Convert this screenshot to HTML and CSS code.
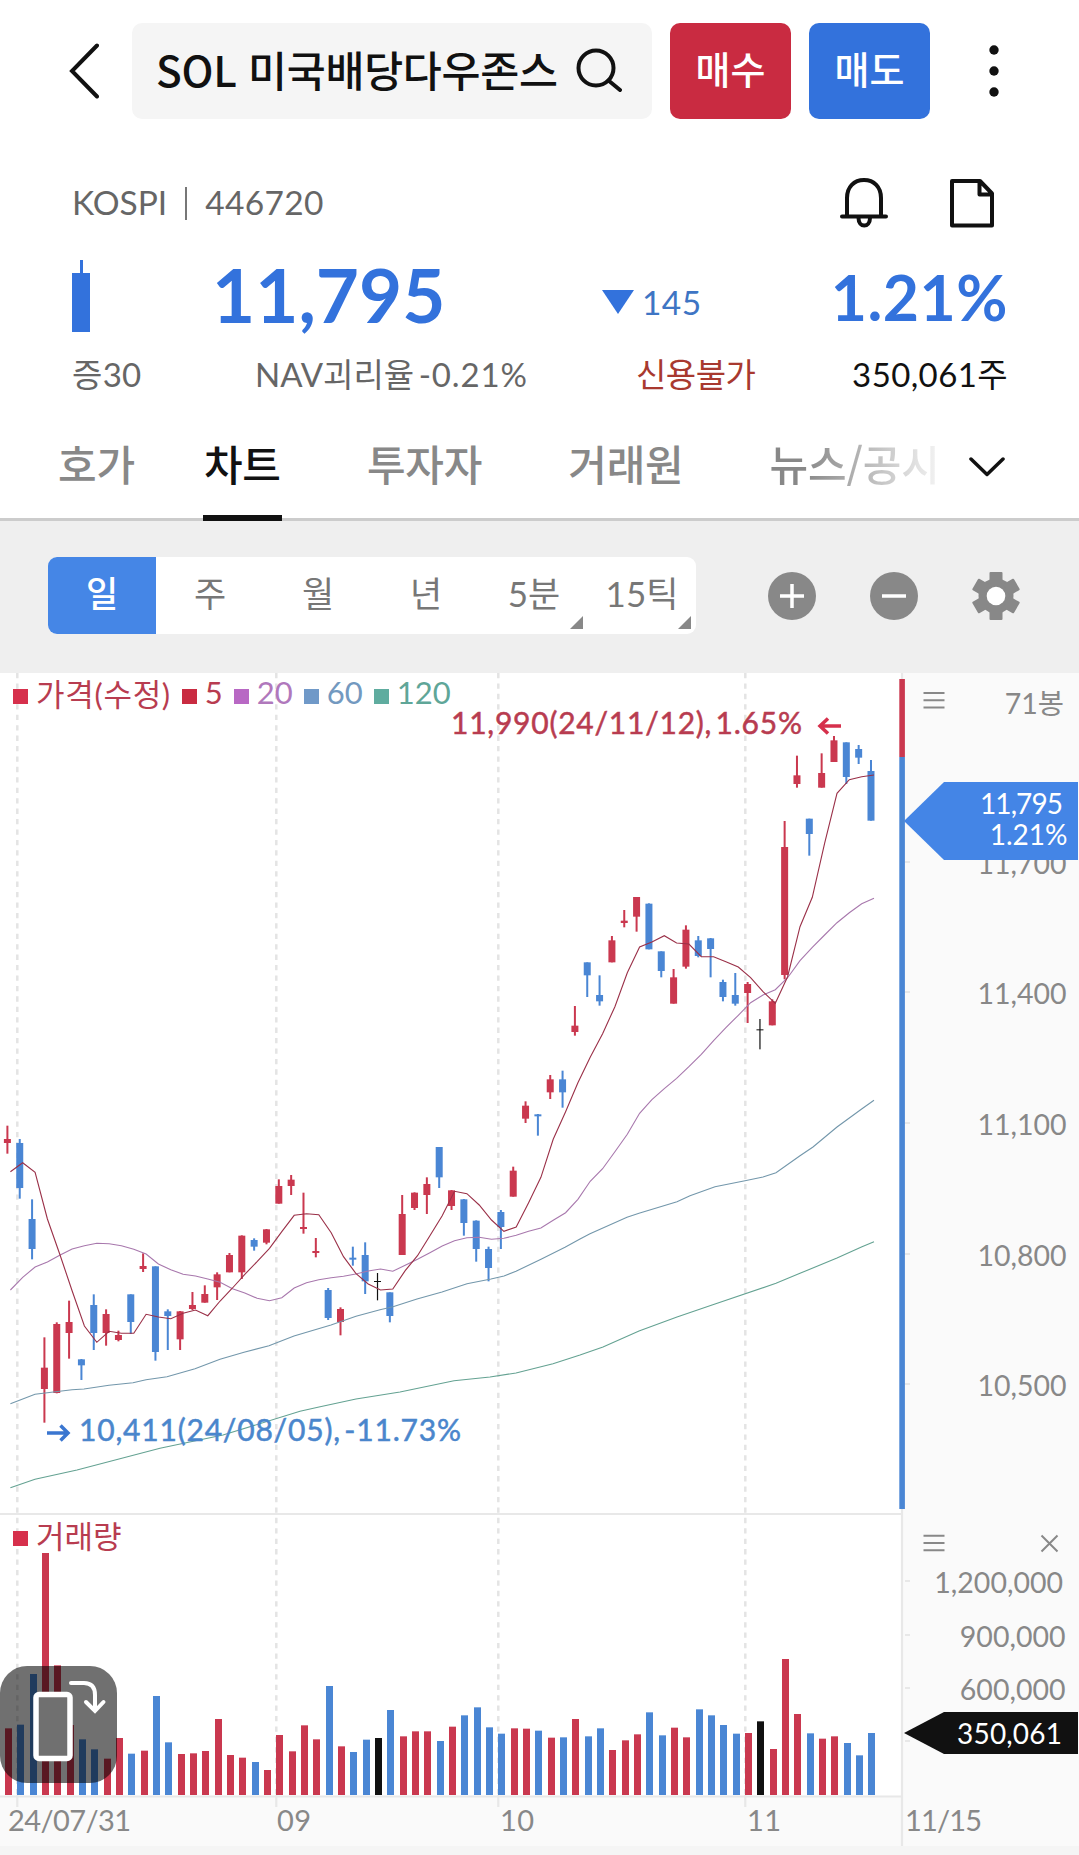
FILE: index.html
```html
<!DOCTYPE html>
<html lang="ko">
<head>
    <meta charset="UTF-8">
    <meta name="viewport" content="width=device-width, initial-scale=1.0">
    <title>SOL 미국배당다우존스</title>
    <link rel="stylesheet" href="styles.css">
</head>
<body>
    <header class="topbar">
        <svg class="back" width="30" height="56" viewBox="0 0 30 56"><path d="M28 2.500L3 28L28 53.500"/></svg>
        <div class="search">
            <span class="search-name">SOL 미국배당다우존스</span>
            <svg width="46" height="46" viewBox="0 0 46 46"><circle cx="20" cy="20" r="17.500"/><path d="M32.500 32.500L44 42"/></svg>
        </div>
        <button class="trade buy">매수</button>
        <button class="trade sell">매도</button>
        <svg class="more" width="10" height="52" viewBox="0 0 10 52"><circle cx="5" cy="5" r="4.700"/><circle cx="5" cy="26" r="4.700"/><circle cx="5" cy="47" r="4.700"/></svg>
    </header>

    <section class="quote">
        <div class="quote-code">
            <span class="market">KOSPI</span><span class="bar"></span><span class="code">446720</span>
            <svg class="bell" width="48" height="50" viewBox="0 0 48 50"><path d="M7 38V20C7 9 14 2 24 2S41 9 41 20V38M2 38.500H46M18.500 40C18.500 50 30 50 30 40"/></svg>
            <svg class="doc" width="44" height="50" viewBox="0 0 44 50"><path d="M2 3H30L42 15.500V47.500H2ZM29.500 4V16.500H41"/></svg>
        </div>
        <div class="quote-price">
            <svg class="mini-candle" width="18" height="72" viewBox="0 0 18 72"><path d="M8 0h3v13h7v59H0V13h8z"/></svg>
            <span class="price">11,795</span>
            <svg class="down" width="32" height="24" viewBox="0 0 32 24"><path d="M0 0H32L16 24Z"/></svg>
            <span class="diff">145</span>
            <span class="rate">1.21%</span>
        </div>
        <div class="quote-info">
            <span class="margin">증30</span>
            <span class="nav">NAV괴리율 <i>-0.21%</i></span>
            <span class="credit">신용불가</span>
            <span class="volume">350,061주</span>
        </div>
    </section>

    <nav class="tabs">
        <a class="tab">호가</a>
        <a class="tab active">차트</a>
        <a class="tab">투자자</a>
        <a class="tab">거래원</a>
        <a class="tab fade">뉴스/공시</a>
        <svg width="36" height="20" viewBox="0 0 36 20"><path d="M2 2L18 17.500L34 2"/></svg>
    </nav>

    <section class="toolbar">
        <div class="periods">
            <span class="period active">일</span>
            <span class="period">주</span>
            <span class="period">월</span>
            <span class="period">년</span>
            <span class="period sub">5분</span>
            <span class="period sub">15틱</span>
        </div>
        <svg width="48" height="48" viewBox="0 0 48 48"><circle cx="24" cy="24" r="24"/><path class="sign" d="M12 24H36M24 12V36"/></svg>
        <svg width="48" height="48" viewBox="0 0 48 48"><circle cx="24" cy="24" r="24"/><path class="sign" d="M12 24H36"/></svg>
        <svg width="48" height="48" viewBox="0 0 48 48">
            <circle cx="24" cy="24" r="17.500"/>
            <g id="teeth"></g>
            <circle class="hole" cx="24" cy="24" r="9.300"/>
        </svg>
    </section>

    <main class="chart">
        <div class="plot">
            <svg id="plot" width="903" height="1173" viewBox="0 0 903 1173"></svg>
            <div class="legend">
                <i class="price-mark"></i><span class="c-price wide">가격(수정)</span>
                <i class="m5"></i><span class="c5">5</span>
                <i class="m20"></i><span class="c20">20</span>
                <i class="m60"></i><span class="c60">60</span>
                <i class="m120"></i><span class="c120">120</span>
            </div>
            <div class="legend vol">
                <i class="price-mark"></i><span class="c-price">거래량</span>
            </div>
            <div class="rotate">
                <svg width="117" height="117" viewBox="0 0 117 117">
                    <rect x="36" y="28.500" width="34" height="64" rx="3"/>
                    <path d="M71 17H84Q95 17 95 29V43M86 36L95 45L103.500 36"/>
                </svg>
            </div>
        </div>
        <svg class="axis" width="176" height="1173" viewBox="0 0 176 1173">
            <path class="ticks" d="M2 189h5M2 319h5M2 450h5M2 581h5M2 711h5M2 908h5M2 962h5M2 1015h5M2 1068h5"/>
            <path class="icon" d="M20.500 20h21M20.500 27.300h21M20.500 34.500h21M20.500 862.800h21M20.500 870h21M20.500 877.300h21M138.500 862.500l16 16M154.500 862.500l-16 16"/>
            <g class="labels">
                <text x="161" y="41">71봉</text>
                <text x="163.500" y="200.500">11,700</text>
                <text x="163.500" y="330.500">11,400</text>
                <text x="163.500" y="461.500">11,100</text>
                <text x="163.500" y="592.500">10,800</text>
                <text x="163.500" y="722.500">10,500</text>
                <text x="160" y="919.500">1,200,000</text>
                <text x="162.500" y="973.500">900,000</text>
                <text x="162.500" y="1026.500">600,000</text>
            </g>
            <path class="tag-price" d="M1 148L41 109H175V187H41Z"/>
            <path class="tag-vol" d="M1 1060L41 1039H175V1081H41Z"/>
            <g class="tag-text">
                <text x="160" y="141" textLength="83">11,795</text>
                <text x="164.500" y="172">1.21%</text>
                <text x="159" y="1070.500" textLength="105">350,061</text>
            </g>
            <text class="date" x="2" y="1158" textLength="77">11/15</text>
        </svg>
    </main>

    <script>
        const RED = '#ca384f', BLUE = '#4a86d4', BLACK = '#111';
        const STEP = 12.337;   // distance between two bars
        const BASE = 1122;     // bottom of the volume bars
        const colors = { r: RED, b: BLUE, k: BLACK };

        // [colour, high, body top, body bottom, low, volume top], in 1/3 px below the block's offset
        const blocks = [
            { offset: 1221, rows: [
                ['r',137,177,189,221,715], ['b',177,189,324,356,704], ['b',358,417,507,538,552],
                ['r',772,863,927,1028,189], ['r',727,732,939,940,526], ['r',662,726,759,836,705],
                ['b',837,838,856,900,748], ['b',643,675,759,810,778], ['r',688,702,759,797,806],
                ['r',752,765,780,784,744], ['b',643,643,726,762,791], ['r',520,558,567,576,782],
                ['b',559,559,816,842,618], ['b',688,694,708,810,757], ['r',693,694,778,810,792],
                ['r',636,675,687,690,790], ['r',616,642,668,668,783], ['r',577,583,622,660,687],
                ['r',519,525,577,577,795], ['r',466,467,577,597,803], ['b',475,480,500,512,816],
                ['r',447,448,488,493,840], ['r',298,318,371,371,735], ['r',285,299,318,345,784],
                ['r',338,441,447,461,706], ['r',474,513,519,532,748], ['b',624,630,714,720,588],
                ['r',682,687,726,766,769], ['b',500,533,539,557,786], ['b',487,525,604,642,749],
                ['k',579,603,606,661,744], ['b',637,637,708,727,660], ['r',345,402,525,525,739],
                ['r',337,338,384,390,724], ['r',292,312,345,402,724], ['b',201,201,292,324,753],
                ['r',330,331,378,390,710], ['b',357,358,429,467,676], ['b',421,422,507,545,652],
                ['b',500,507,564,604,712], ['b',390,396,441,507,731], ['r',260,272,350,350,715],
                ['r',64,77,116,129,716], ['b',102,103,109,167,722]
            ]},
            { offset: 561, rows: [
                ['r',645,658,697,717,743], ['b',632,658,697,743,742], ['r',438,497,516,527,687],
                ['b',307,307,346,411,739], ['b',346,405,424,437,715], ['r',228,241,307,307,780],
                ['r',150,182,189,202,751], ['r',111,111,170,215,733], ['b',130,131,268,268,667],
                ['b',274,274,333,352,736], ['r',327,352,431,431,713], ['r',196,209,320,326,742],
                ['b',228,241,288,292,658], ['b',234,235,267,352,676], ['b',359,366,411,424,705],
                ['b',339,405,431,437,731], ['r',366,372,399,489,729], ['k',477,508,511,568,694],
                ['r',418,424,496,496,777]
            ]},
            { offset: -9, rows: [
                ['r',453,531,915,928,507], ['r',257,316,342,353,672], ['b',446,446,492,557,730],
                ['r',250,309,353,353,746], ['r',198,211,276,276,739], ['b',217,217,321,342,759],
                ['b',225,237,263,282,796], ['b',270,303,452,452,729]
            ]}
        ];

        // moving averages, one value per bar
        const ma5 = [
            ...[275,248,277,417,522,632,738,787,754,760,760,703,711,716,700,690,707,663,624,583,545,505,455,406,
                401,404,458,530,580,612,630,627,572,527,467,407,334,341,375,420,454,441,368,292].map(v => v + 1221),
            ...[838,755,668,592,521,440,338,261,246,227,249,252,290,290,305,321,353,395,430].map(v => v + 561),
            ...[920,770,682,520,370,329,320,315].map(v => v - 9)
        ];
        const ma20 = [
            ...[630,592,561,546,526,507,497,490,491,497,508,522,552,569,583,588,597,607,626,639,655,662,653,624,
                608,599,593,589,582,573,567,574,556,538,518,498,482,473,472,478,475,466,454,444,421,398,358].map(v => v + 1221),
            ...[964,926,875,823,760,719,686,655,620,583,542,503,466,428,405,389,353,302,262,225,188,158,131,115].map(v => v + 561)
        ];
        // the slow averages as x,y points
        const ma60 = '10.4,730.7 35,721.300 72,716.700 84,716 109,712.300 133,709.700 146,706.700 167,703.700 195,695.700 220,686.300 244,679.300 269,672.700 294,663 331,652 356,643.300 380,636.700 393,633.700 417,626 442,619 467,610.700 491,606 504,603 516,598.300 541,586.300 565,574.300 580,566 590,560.700 627,544.300 639,540.300 677,528.700 690,522.700 715,513.700 745,507.700 763,504 776,499.700 800,482.700 813,474 837,454 862,435.700 874,427.300';
        const ma120 = '10.4,814.700 35,806.300 77,797 160,775.300 223,762 300,738.300 319,734 356,726 400,719 454,707.700 490,704 516,700 553,690.700 580,682 603,674 639,658 677,644 715,631 776,610.300 800,600.300 837,585 862,573.700 874,568.700';

        let out = '';

        // grid
        for (const x of [17.3, 276.3, 498.3, 745.3]) {
            out += `<path d="M${x} 0V1122" class="grid"/><path d="M${x} 1122V1134" class="grid-tick"/>`;
        }
        out += '<path class="rule" d="M0 841H902M0 1123.500H902"/><path class="rule" d="M902 0V1173"/>';

        // candles and volume
        let i = 0;
        for (const block of blocks) {
            for (const [c, high, top, bottom, low, vol] of block.rows) {
                const y = v => (v + block.offset) / 3;
                const x = 7.4 + i * STEP;
                const body = Math.max(y(bottom) - y(top), 1);
                const wick = c === 'k' ? 1.2 : 2;
                const vy = 817 + vol / 3;
                out += `<rect x="${x - wick / 2}" y="${y(high)}" width="${wick}" height="${y(low) - y(high)}" fill="${colors[c]}"/>`;
                out += `<rect x="${x - 3.5}" y="${y(top)}" width="7" height="${body}" fill="${colors[c]}"/>`;
                out += `<rect x="${Math.round(x - 2.5)}" y="${vy}" width="7" height="${BASE - vy}" fill="${colors[c]}"/>`;
                i++;
            }
        }

        const line = data => data.map((v, n) => `${(10.4 + n * STEP).toFixed(1)},${(v / 3).toFixed(1)}`).join(' ');
        out += `<polyline class="ma ma120" points="${ma120}"/><polyline class="ma ma60" points="${ma60}"/>`;
        out += `<polyline class="ma ma20" points="${line(ma20)}"/><polyline class="ma ma5" points="${line(ma5)}"/>`;

        // high / low marks
        out += '<text class="mark high" x="451" y="60.500" textLength="351">11,990(24/11/12), 1.65%</text>';
        out += '<path class="arrow high" d="M841 53H820M828 45.500L820 53L828 60.500"/>';
        out += '<text class="mark low" x="79" y="767.500" textLength="382">10,411(24/08/05), -11.73%</text>';
        out += '<path class="arrow low" d="M47 760H68M60.500 752.500L68 760L60.500 767.500"/>';

        // dates
        for (const [x, t, w] of [[8, '24/07/31', 123], [277, '09', 34], [500, '10', 34], [747, '11', 34]]) {
            out += `<text class="date" x="${x}" y="1158" textLength="${w}">${t}</text>`;
        }

        // up / down share bar
        out += `<rect x="899.300" y="6" width="5.600" height="78" fill="${RED}"/><rect x="899.300" y="84" width="5.600" height="752" fill="${BLUE}"/>`;
        document.getElementById('plot').innerHTML = out;

        // gear
        let teeth = '';
        for (let a = 0; a < 360; a += 60) {
            teeth += `<rect x="17.500" y="0" width="13" height="12" rx="1" transform="rotate(${a} 24 24)"/>`;
        }
        document.getElementById('teeth').innerHTML = teeth;
    </script>
</body>
</html>
```
FILE: styles.css
```css
* {
    box-sizing: border-box;
}

body {
    margin: 0;
    width: 1079px;
    height: 1855px;
    overflow: hidden;
    background-color: #f5f5f5;
    color: #111;
    font-family: Lato, "Noto Sans CJK KR", sans-serif;
}

svg {
    display: block;
    flex: none;
}

/* Top bar */
.topbar {
    display: flex;
    align-items: center;
    height: 142px;
    padding-left: 69px;
    background-color: #fff;
}

.topbar svg {
    fill: none;
    stroke: #111;
    stroke-width: 4;
    stroke-linecap: round;
}

.topbar .more {
    margin-left: 59px;
    fill: #111;
    stroke: none;
}

.search {
    display: flex;
    align-items: center;
    width: 520px;
    height: 96px;
    margin: 0 18px 0 33px;
    padding-left: 24px;
    border-radius: 10px;
    background-color: #f5f5f5;
}

.search-name {
    width: 420px;
    padding-bottom: 5px;
    font: 500 42.4px/91px "Noto Sans CJK KR", sans-serif;
    letter-spacing: -0.3px;
    white-space: nowrap;
}

.trade {
    width: 121px;
    height: 96px;
    margin-right: 18px;
    padding: 0 0 8px;
    border: none;
    border-radius: 10px;
    color: #fff;
    font: 500 38px "Noto Sans CJK KR", sans-serif;
}

.buy {
    background-color: #c92b41;
}

.sell {
    margin-right: 0;
    background-color: #3372dc;
}

/* Quote */
.quote {
    height: 264px;
    padding: 36px 71px 0 72px;
    background-color: #fff;
}

.quote-code,
.quote-price,
.quote-info {
    display: flex;
    align-items: center;
}

.quote-code {
    height: 50px;
    font-size: 33.500px;
    color: #666;
}

.market,
.code {
    margin-top: -2px;
}

.quote-code .bar {
    width: 2px;
    height: 33px;
    margin: 0 18px;
    background-color: #777;
}

.code {
    letter-spacing: 0.3px;
}

.bell,
.doc {
    fill: none;
    stroke: #111;
    stroke-width: 4;
    stroke-linecap: round;
    stroke-linejoin: round;
}

.bell {
    margin-left: auto;
}

.doc {
    margin: 0 14px 0 62px;
}

.quote-price {
    height: 72px;
    margin-top: 32px;
    color: #3372dc;
    fill: #3372dc;
}

.price {
    width: 390px;
    margin: -5px 0 0 122px;
    font-size: 74.500px;
    font-weight: 700;
    line-height: 72px;
}

.down {
    margin-top: 11px;
}

.diff {
    margin: 11px 0 0 8px;
    font-size: 33.500px;
    letter-spacing: 0.4px;
    color: #3e75c4;
}

.rate {
    margin: 1px 0 0 auto;
    font-size: 62.500px;
    font-weight: 700;
    letter-spacing: 0.5px;
}

.quote-info {
    height: 50px;
    margin-top: 16px;
    font-size: 33px;
    color: #666;
    white-space: nowrap;
}

.margin {
    width: 183px;
    letter-spacing: 0.3px;
}

.nav {
    width: 381px;
    word-spacing: -4px;
}

.nav i {
    font-style: normal;
    letter-spacing: 0.9px;
}

.credit {
    letter-spacing: -0.5px;
    color: #a8392f;
}

.volume {
    margin-left: auto;
    letter-spacing: 0.4px;
    color: #111;
}

/* Tabs */
.tabs {
    display: flex;
    height: 115px;
    padding-left: 58px;
    border-bottom: 3px solid #ccc;
    background-color: #fff;
    font: 500 42px/114px "Noto Sans CJK KR", sans-serif;
    letter-spacing: -0.2px;
    color: #888;
}

.tab {
    height: 115px;
    margin-right: 86px;
    white-space: nowrap;
}

.tab:first-child {
    margin-right: 68px;
}

.tab.active {
    width: 79px;
    margin-right: 85px;
    border-bottom: 6px solid #111;
    padding-left: 1px;
    color: #111;
}

.tab.fade {
    margin-right: 29px;
    background: linear-gradient(to right, #888 20%, #f0f0f0 97%);
    -webkit-background-clip: text;
    background-clip: text;
    color: transparent;
}

.tabs svg {
    margin-top: 51px;
    fill: none;
    stroke: #111;
    stroke-width: 3.500;
    stroke-linecap: round;
    stroke-linejoin: round;
}

/* Toolbar */
.toolbar {
    display: flex;
    align-items: center;
    gap: 54px;
    height: 152px;
    padding: 0 0 3px 48px;
    background-color: #efefef;
    fill: #888;
}

.periods {
    display: flex;
    width: 648px;
    height: 77px;
    margin-right: 18px;
    border-radius: 9px;
    overflow: hidden;
    background-color: #fff;
}

.period {
    position: relative;
    width: 108px;
    font-size: 35px;
    line-height: 73px;
    text-align: center;
    color: #777;
}

.period.active {
    background-color: #4586e6;
    color: #fff;
    font-weight: 500;
}

.period.sub::after {
    content: "";
    position: absolute;
    right: 5px;
    bottom: 5px;
    border-left: 13px solid transparent;
    border-bottom: 13px solid #888;
}

.sign {
    stroke: #fff;
    stroke-width: 3.500;
}

.hole {
    fill: #fff;
}

/* Chart */
.chart {
    display: flex;
    height: 1173px;
}

.plot {
    position: relative;
    width: 903px;
    background: linear-gradient(#fff 1123px, #fafafa 1123px);
}

.plot svg {
    overflow: visible;
}

.axis {
    background-color: #fafafa;
}

.grid {
    stroke: #e4e4e4;
    stroke-width: 2.500;
    stroke-dasharray: 5.300 5.130;
}

.grid-tick,
.rule,
.ticks {
    fill: none;
    stroke: #e8e8e8;
    stroke-width: 2.200;
}

.ma {
    fill: none;
    stroke-width: 1.100;
}

.ma5 {
    stroke: #9a3048;
}

.ma20 {
    stroke: #a878ad;
}

.ma60 {
    stroke: #7397ab;
}

.ma120 {
    stroke: #64a292;
}

.mark {
    font-size: 30px;
    word-spacing: -5px;
    stroke-width: 0.500;
}

text.high {
    fill: #b83c50;
    stroke: #b83c50;
}

text.low {
    fill: #4a86cc;
    stroke: #4a86cc;
}

.arrow {
    fill: none;
    stroke-width: 3.500;
}

.arrow.high {
    stroke: #d6304c;
}

.arrow.low {
    stroke: #3a76d0;
}

.date {
    font-size: 29px;
    fill: #888;
}

.icon {
    fill: none;
    stroke: #888;
    stroke-width: 2;
}

.labels {
    font-size: 28.500px;
    fill: #888;
    text-anchor: end;
}

.tag-price {
    fill: #4485e6;
}

.tag-vol {
    fill: #111;
}

.tag-text {
    font-size: 28px;
    fill: #fff;
    text-anchor: end;
}

/* Legends lie over the plot */
.legend {
    position: absolute;
    top: 0;
    left: 13px;
    display: flex;
    align-items: center;
    height: 42px;
    font-size: 31px;
}

.legend span {
    margin-top: -4px;
}

.legend i {
    width: 15px;
    height: 15px;
    margin: 5px 8px 0 11px;
}

.legend i:first-child {
    margin-left: 0;
}

.legend .wide {
    letter-spacing: 0.7px;
}

.legend.vol {
    top: 842px;
}

.price-mark {
    background-color: #d6304c;
}

.m5 {
    background-color: #c92b41;
}

.m20 {
    background-color: #b868c4;
}

.m60 {
    background-color: #7099c8;
}

.m120 {
    background-color: #5fac9f;
}

.c-price,
.c5 {
    color: #b83c50;
}

.c20 {
    color: #b078bc;
}

.c60 {
    color: #7399c0;
}

.c120 {
    color: #5fa698;
}

.rotate {
    position: absolute;
    left: 0;
    top: 993px;
    border-radius: 27px;
    background-color: rgba(0, 0, 0, 0.56);
}

.rotate svg {
    fill: none;
    stroke: #fff;
    stroke-width: 4;
    stroke-linecap: round;
}

.rotate rect {
    fill: #707070;
    stroke-width: 5.500;
}
```
